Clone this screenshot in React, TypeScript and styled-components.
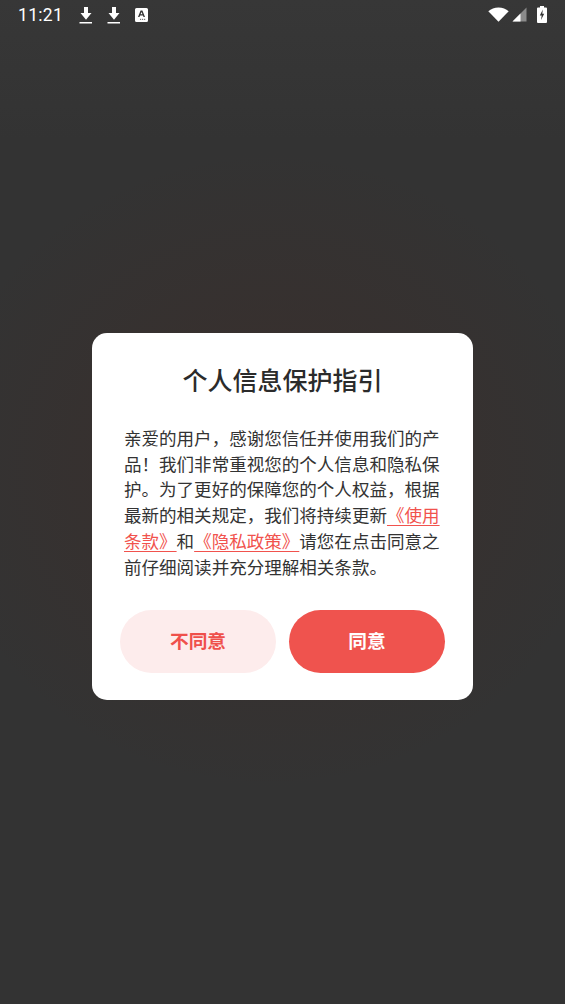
import React from 'react';
import styled, { createGlobalStyle } from 'styled-components';

const GlobalStyle = createGlobalStyle`
    html, body {
        margin: 0;
        padding: 0;
        background: #333333;
    }
    * {
        box-sizing: border-box;
    }
`;

const FONT = `"Noto Sans CJK SC", "Noto Sans", sans-serif`;

const DownloadIcon = () => (
    <svg width="14" height="18" viewBox="0 0 14 18">
        <path d="M5 1h4v6h3.500L7 13.800 1.500 7H5z" fill="#fff" />
        <rect x="0.500" y="16" width="12.500" height="1.500" fill="#fff" />
    </svg>
);

const TranslateIcon = () => (
    <svg width="13" height="14" viewBox="0 0 13 14">
        <path d="M0 1.500A1.500 1.500 0 0 1 1.500 0h10A1.500 1.500 0 0 1 13 1.500v11a1.500 1.500 0 0 1-1.500 1.500h-10A1.500 1.500 0 0 1 0 12.500z" fill="#fff" />
        <path d="M5.600 2.500h1.800l2.600 6.500H8.500L8 7.600H5l-.5 1.400H3zM5.500 6.300h2L6.500 3.900z" fill="#333" fillRule="evenodd" />
        <rect x="7" y="10.800" width="1.200" height="1.200" fill="#777" />
        <rect x="9" y="10.800" width="1.200" height="1.200" fill="#777" />
        <rect x="5" y="10.800" width="1.200" height="1.200" fill="#777" />
    </svg>
);

const WifiIcon = () => (
    <svg width="21" height="15" viewBox="0 0 21 15">
        <path d="M0.300 4.200C3 1.700 6.500 0.400 10.500 0.400s7.500 1.300 10.200 3.800L10.500 14.800z" fill="#fff" />
    </svg>
);

const SignalIcon = () => (
    <svg width="15" height="15" viewBox="0 0 15 15">
        <path d="M14.500 0.500v14H0.500z" fill="#8a8a8a" />
        <path d="M8.500 6.500v8h-8z" fill="#fff" />
    </svg>
);

const BatteryIcon = () => (
    <svg width="10" height="17" viewBox="0 0 10 17">
        <path d="M3 0h4v1.500h2a1 1 0 0 1 1 1V16a1 1 0 0 1-1 1H1a1 1 0 0 1-1-1V2.500a1 1 0 0 1 1-1h2z" fill="#fff" />
        <path d="M5.800 3.500 2.800 9.500h1.900L4 14l3.200-6.300H5.300z" fill="#333" />
    </svg>
);

const App = (): JSX.Element => (
    <SPage>
        <GlobalStyle />
        <SStatusBar>
            <STime>11:21</STime>
            <SNotifications>
                <DownloadIcon />
                <DownloadIcon />
                <TranslateIcon />
            </SNotifications>
            <SSystemIcons>
                <WifiIcon />
                <SignalIcon />
                <SBatterySlot>
                    <BatteryIcon />
                </SBatterySlot>
            </SSystemIcons>
        </SStatusBar>
        <SDialog>
            <STitle>个人信息保护指引</STitle>
            <SBody>
                亲爱的用户，感谢您信任并使用我们的产品！我们非常重视您的个人信息和隐私保护。为了更好的保障您的个人权益，根据最新的相关规定，我们将持续更新
                <SLink>《使用</SLink><SLink>条款》</SLink>和<SLink>《隐私政策》</SLink>
                请您在点击同意之前仔细阅读并充分理解相关条款。
            </SBody>
            <SActions>
                <SButton type="button">不同意</SButton>
                <SButton type="button" $primary>同意</SButton>
            </SActions>
        </SDialog>
    </SPage>
);

const SPage = styled.div`
    width: 565px;
    height: 1004px;
    overflow: hidden;
    display: flex;
    flex-direction: column;
    align-items: center;
    font-family: ${FONT};
    background:
        radial-gradient(ellipse 340px 320px at 270px 470px, rgba(70, 38, 30, 0.36), rgba(70, 38, 30, 0) 100%),
        linear-gradient(#373737 0, #333333 140px, #333333 100%);
`;

const SStatusBar = styled.div`
    width: 100%;
    height: 30px;
    flex-shrink: 0;
    display: flex;
    align-items: center;
    padding: 0 18px 0 18px;
    color: #fff;
`;

const STime = styled.span`
    font-family: Roboto, sans-serif;
    font-size: 17.500px;
    letter-spacing: 0.3px;
    line-height: 32px;
    width: 61px;
`;

const SNotifications = styled.div`
    display: flex;
    align-items: center;
    gap: 14px;
`;

const SSystemIcons = styled.div`
    margin-left: auto;
    display: flex;
    align-items: center;
    gap: 3px;
    padding-bottom: 1px;
`;

const SBatterySlot = styled.div`
    display: flex;
    margin-left: 7px;
`;

const SDialog = styled.div`
    width: 381px;
    height: 367px;
    margin-top: 303px;
    padding: 26px 28px 27px;
    border-radius: 15px;
    background: #fff;
    display: flex;
    flex-direction: column;
`;

const STitle = styled.h1`
    margin: 0;
    font-size: 25px;
    line-height: 40px;
    font-weight: 500;
    color: #2b2b2b;
    text-align: center;
`;

const SBody = styled.p`
    margin: 26px 0 0;
    padding: 0 4px;
    font-size: 17.550px;
    line-height: 25.700px;
    font-weight: 400;
    color: #333333;
`;

const SLink = styled.span`
    color: #f1524d;
    text-decoration: underline;
    text-underline-offset: 3px;
    text-decoration-thickness: 1px;
`;

const SActions = styled.div`
    margin-top: auto;
    display: flex;
    justify-content: space-between;
`;

const SButton = styled.button<{ $primary?: boolean }>`
    width: 156px;
    height: 63px;
    border: none;
    border-radius: 32px;
    padding: 0 0 4px;
    font-family: ${FONT};
    font-size: 18.700px;
    font-weight: 700;
    color: ${(props) => (props.$primary ? '#ffffff' : '#ef504b')};
    background: ${(props) => (props.$primary ? '#ef534e' : '#fdecec')};
`;

export default App;
